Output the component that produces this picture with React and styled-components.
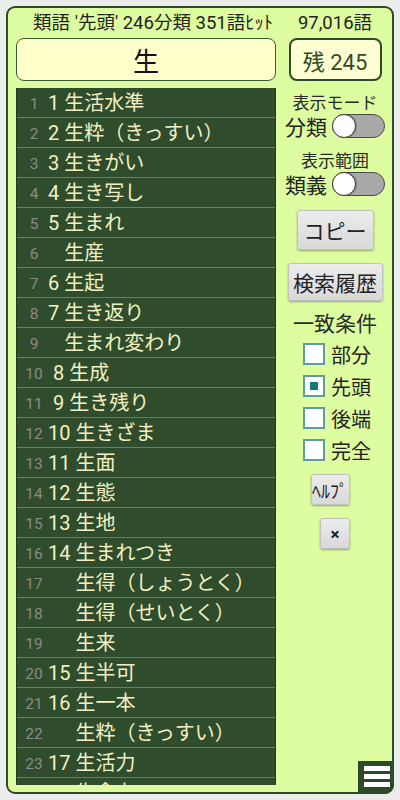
import styled, { createGlobalStyle } from 'styled-components';

const GlobalStyle = createGlobalStyle`
  html, body {
    margin: 0;
    padding: 0;
    background: #ececec;
  }
  body {
    font-family: Roboto, "Noto Sans CJK JP", sans-serif;
    color: #222;
  }
  #root {
    width: 400px;
    height: 800px;
  }
  * {
    box-sizing: border-box;
  }
`;

const Panel = styled.div`
  position: relative;
  margin: 6px;
  height: 788px;
  border: 2px solid #2e4a2c;
  border-radius: 9px;
  background: #ddfda0;
  padding: 0 4px 7px 8px;
  display: flex;
  flex-direction: column;
`;

const Header = styled.div`
  height: 30px;
  display: grid;
  grid-template-columns: 260px 106px;
  column-gap: 6px;
  align-items: center;
  font-size: 18.5px;
  line-height: 22px;
  white-space: nowrap;
`;

const HeaderCell = styled.div`
  text-align: center;
  padding-left: ${p => p.$shift || 0}px;
`;

const Body = styled.div`
  flex: 1;
  min-height: 0;
  display: grid;
  grid-template-columns: 260px 106px;
  column-gap: 6px;
`;

const LeftCol = styled.div`
  display: flex;
  flex-direction: column;
  gap: 7px;
  min-height: 0;
`;

const SearchBox = styled.div`
  height: 43px;
  flex-shrink: 0;
  background: #ffffcc;
  border: 1px solid #3a5a34;
  border-radius: 8px;
  display: flex;
  align-items: center;
  justify-content: center;
  font-size: 26px;
  color: #111;
`;

const List = styled.div`
  flex: 1;
  min-height: 0;
  overflow: hidden;
  background: #2f4d2d;
  border-left: 1px solid #223a20;
  border-right: 1px solid #223a20;
`;

const Row = styled.div`
  height: 30px;
  border-bottom: 1px solid #5c894c;
  display: flex;
  align-items: center;
  padding-left: 5px;
  white-space: pre;
`;

const Index = styled.span`
  width: 24px;
  text-align: center;
  font-size: 15.5px;
  color: #8a8a8a;
  padding-top: 3px;
`;

const Word = styled.span`
  margin-left: 2px;
  font-size: 20px;
  line-height: 24px;
  color: #f3f1c4;
`;

const Num = styled.span`
  visibility: ${p => (p.$hidden ? 'hidden' : 'visible')};
`;

const RightCol = styled.div`
  display: flex;
  flex-direction: column;
  align-items: center;
`;

const RemainButton = styled.div`
  width: 93px;
  height: 43px;
  flex-shrink: 0;
  border: 2px solid #2e4a2c;
  border-radius: 8px;
  background: #ffffd2;
  color: #2e4a2c;
  font-size: 22px;
  display: flex;
  align-items: center;
  justify-content: center;
`;

const Caption = styled.div`
  margin-top: ${p => p.$top}px;
  font-size: ${p => p.$size || 17}px;
  line-height: ${p => (p.$size || 17) + 3}px;
  color: #2a2a2a;
  white-space: nowrap;
`;

const SwitchRow = styled.div`
  height: 26px;
  display: flex;
  align-items: center;
  gap: 5px;
  font-size: 21px;
  color: #222;
`;

const Track = styled.span`
  position: relative;
  width: 53px;
  height: 24px;
  border-radius: 12px;
  background: #a9a9a9;
  border: 1px solid #4a4a4a;
`;

const Knob = styled.span`
  position: absolute;
  left: -1px;
  top: -1px;
  width: 24px;
  height: 24px;
  border-radius: 50%;
  background: #fff;
  border: 1px solid #3a3a3a;
  box-shadow: 1px 0 1px rgba(0, 0, 0, 0.25);
`;

const GrayButton = styled.div`
  margin-top: ${p => p.$top}px;
  margin-right: ${p => p.$right || 0}px;
  width: ${p => p.$w}px;
  height: ${p => p.$h}px;
  display: flex;
  align-items: center;
  justify-content: center;
  background: linear-gradient(#ececec, #d8d8d8);
  border: 1px solid #c2c2c2;
  border-radius: 3px;
  box-shadow: 0 1px 2px rgba(0, 0, 0, 0.35);
  font-size: ${p => p.$size}px;
  font-weight: ${p => p.$weight || 400};
  color: #222;
  white-space: nowrap;
`;

const CheckList = styled.div`
  margin-top: 2px;
  padding-left: 4px;
  display: flex;
  flex-direction: column;
`;

const CheckRow = styled.div`
  height: 32px;
  display: flex;
  align-items: center;
  gap: 6px;
  font-size: 20px;
  color: #222;
`;

const Box = styled.span`
  width: 22px;
  height: 22px;
  background: #fff;
  border: 2px solid #5f9c9a;
  display: flex;
  align-items: center;
  justify-content: center;
`;

const Mark = styled.span`
  width: 8px;
  height: 8px;
  background: #137a78;
`;

const Menu = styled.div`
  position: absolute;
  right: -2px;
  bottom: -2px;
  width: 36px;
  height: 33px;
  background: #2e4a2c;
  border-radius: 0 0 9px 0;
  padding: 5px 4px 0 6px;
  display: flex;
  flex-direction: column;
  gap: 3px;
`;

const Bar = styled.span`
  height: 5px;
  background: #fff;
`;

const rows = [
  [1, '1', '生活水準'],
  [2, '2', '生粋（きっすい）'],
  [3, '3', '生きがい'],
  [4, '4', '生き写し'],
  [5, '5', '生まれ'],
  [6, '5', '生産', true],
  [7, '6', '生起'],
  [8, '7', '生き返り'],
  [9, '7', '生まれ変わり', true],
  [10, ' 8', '生成'],
  [11, ' 9', '生き残り'],
  [12, '10', '生きざま'],
  [13, '11', '生面'],
  [14, '12', '生態'],
  [15, '13', '生地'],
  [16, '14', '生まれつき'],
  [17, '14', '生得（しょうとく）', true],
  [18, '14', '生得（せいとく）', true],
  [19, '14', '生来', true],
  [20, '15', '生半可'],
  [21, '16', '生一本'],
  [22, '16', '生粋（きっすい）', true],
  [23, '17', '生活力'],
  [24, '17', '生命力', true],
];

const matches = [
  { label: '部分', checked: false },
  { label: '先頭', checked: true },
  { label: '後端', checked: false },
  { label: '完全', checked: false },
];

const Toggle = ({ label }) => (
  <SwitchRow>
    {label}
    <Track>
      <Knob />
    </Track>
  </SwitchRow>
);

export default function App() {
  return (
    <>
      <GlobalStyle />
      <Panel>
        <Header>
          <HeaderCell $shift={14}>類語 '先頭' 246分類 351語ﾋｯﾄ</HeaderCell>
          <HeaderCell>97,016語</HeaderCell>
        </Header>
        <Body>
          <LeftCol>
            <SearchBox>生</SearchBox>
            <List>
              {rows.map(([idx, num, word, cont]) => (
                <Row key={idx}>
                  <Index>{idx}</Index>
                  <Word>
                    <Num $hidden={cont}>{num}</Num> {word}
                  </Word>
                </Row>
              ))}
            </List>
          </LeftCol>
          <RightCol>
            <RemainButton>残 245</RemainButton>
            <Caption $top={12}>表示モード</Caption>
            <Toggle label="分類" />
            <Caption $top={12}>表示範囲</Caption>
            <Toggle label="類義" />
            <GrayButton $top={13} $w={77} $h={40} $size={21}>コピー</GrayButton>
            <GrayButton $top={13} $w={95} $h={38} $size={21}>検索履歴</GrayButton>
            <Caption $top={11} $size={21}>一致条件</Caption>
            <CheckList>
              {matches.map(m => (
                <CheckRow key={m.label}>
                  <Box>{m.checked && <Mark />}</Box>
                  {m.label}
                </CheckRow>
              ))}
            </CheckList>
            <GrayButton $top={8} $right={10} $w={39} $h={31} $size={18}>ﾍﾙﾌﾟ</GrayButton>
            <GrayButton $top={13} $w={30} $h={31} $size={17} $weight={700}>×</GrayButton>
          </RightCol>
        </Body>
        <Menu>
          <Bar />
          <Bar />
          <Bar />
        </Menu>
      </Panel>
    </>
  );
}
